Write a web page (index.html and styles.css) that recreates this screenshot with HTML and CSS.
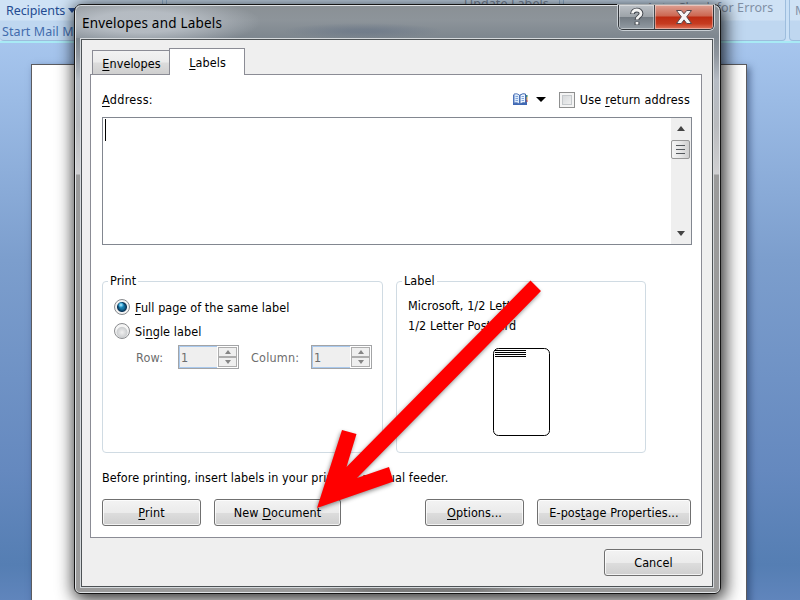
FILE: index.html
```html
<!DOCTYPE html>
<html lang="en">
  <head>
    <meta charset="UTF-8" />
    <meta name="viewport" content="width=device-width, initial-scale=1.0" />
    <title>Envelopes and Labels</title>
    <link rel="stylesheet" href="styles.css">
  </head>
  <body>
    <div class="desktop">
      <div class="ribbon">
        <div class="ribbon-group group-start">
          <span class="recipients">Recipients <i class="caret"></i></span>
          <span class="group-name">Start Mail M</span>
        </div>
        <div class="ribbon-group group-write">
          <span class="update">Update Labels</span>
        </div>
        <div class="ribbon-group group-preview">
          <span class="errors">Auto Check for Errors</span>
        </div>
        <div class="ribbon-group group-finish"><span>M</span></div>
      </div>
      <div class="paper"></div>

      <div class="window">
        <div class="titlebar">
          <h1>Envelopes and Labels</h1>
          <div class="caption-buttons">
            <button class="help" aria-label="Help">
              <svg width="18" height="20" viewBox="0 0 18 20">
                <path d="M4.500 7C4.500 1.800 13 1.800 13 6.500C13 9.700 9 9 9 13M9 14.800V18" fill="none" stroke="#42464d" stroke-width="4.800" />
                <path d="M4.500 6.500C4.500 1.800 13 1.800 13 6.500C13 9.700 9 9 9 12.500M9 15V17.500" fill="none" stroke="#f4f4f4" stroke-width="2.800" />
              </svg>
            </button>
            <button class="close" aria-label="Close">
              <svg width="18" height="16" viewBox="0 0 18 16">
                <path d="M1.500 1.500H6.300L9 4.800L11.700 1.500H16.500L11.700 7.800L16.500 14.500H11.700L9 10.900L6.300 14.500H1.500L6.300 7.800Z" fill="#f6f6f6" stroke="#57474b" />
              </svg>
            </button>
          </div>
        </div>

        <div class="client">
          <div class="tabs">
            <div class="tab"><span><u>E</u>nvelopes</span></div>
            <div class="tab active"><span><u>L</u>abels</span></div>
          </div>

          <div class="panel">
            <div class="address-row">
              <label class="address-label"><u>A</u>ddress:</label>
              <svg class="book" width="16" height="13" viewBox="0 0 16 13">
                <path d="M1 2H15V12H1Z" fill="#3f68b5" />
                <path d="M2 1Q5 0 7.500 2V11Q5 9 2 10Z" fill="#dceafa" stroke="#5a7dbd" />
                <path d="M13.500 1Q11 0 8 2V11Q11 9 13.500 10Z" fill="#eef6ff" stroke="#4168ae" />
                <path d="M3.500 3.500H6M3.500 5.500H6M3.500 7.500H6M9.500 3.500H12M9.500 5.500H12M9.500 7.500H12" stroke="#7fa5dc" />
                <path d="M15 2V4" stroke="#3f9a55" />
                <path d="M15 4V7" stroke="#e8a33b" />
                <path d="M15 7V9" stroke="#c84b3d" />
              </svg>
              <i class="caret black"></i>
              <span class="checkbox"></span>
              <label>Use <u>r</u>eturn address</label>
            </div>

            <div class="address-box">
              <div class="cursor"></div>
              <div class="scrollbar">
                <i class="arrow-up"></i>
                <div class="thumb"><i></i><i></i><i></i></div>
                <i class="arrow-down"></i>
              </div>
            </div>

            <div class="groups">
              <fieldset class="print-group">
                <legend>Print</legend>
                <div class="radio-row">
                  <span class="radio checked"></span>
                  <label><u>F</u>ull page of the same label</label>
                </div>
                <div class="radio-row">
                  <span class="radio"></span>
                  <label>Si<u>n</u>gle label</label>
                </div>
                <div class="spinners">
                  <label class="row-label">Row:</label>
                  <div class="spinner">
                    <span class="value">1</span>
                    <span class="steps"><b><i class="arrow-up"></i></b><b><i class="arrow-down"></i></b></span>
                  </div>
                  <label class="column-label">Column:</label>
                  <div class="spinner">
                    <span class="value">1</span>
                    <span class="steps"><b><i class="arrow-up"></i></b><b><i class="arrow-down"></i></b></span>
                  </div>
                </div>
              </fieldset>

              <fieldset class="label-group">
                <legend>Label</legend>
                <p>Microsoft, 1/2 Letter</p>
                <p>1/2 Letter Postcard</p>
                <svg class="card" width="58" height="89" viewBox="0 0 58 89">
                  <rect x="0.500" y="0.500" width="56" height="87" rx="5" fill="#fff" stroke="#000" />
                  <path d="M2 2.500H33M2 4.500H33M2 6.500H33M2 8.500H33" stroke="#000" />
                </svg>
              </fieldset>
            </div>

            <p class="hint">Before printing, insert labels in your printer's manual feeder.</p>

            <div class="actions">
              <button class="btn"><span><u>P</u>rint</span></button>
              <button class="btn new-doc"><span>New <u>D</u>ocument</span></button>
              <button class="btn options"><span><u>O</u>ptions...</span></button>
              <button class="btn epostage"><span>E-pos<u>t</u>age Properties...</span></button>
            </div>
          </div>

          <div class="footer">
            <button class="btn"><span>Cancel</span></button>
          </div>
        </div>
      </div>

      <!-- pointer to New Document -->
      <svg class="pointer" width="800" height="600" viewBox="0 0 800 600">
        <path d="M530.500 280.500L541 291L357 478L389 467L393.500 481.500L317 508L342 430L356.500 434L346.500 467Z" fill="#ff0000" />
      </svg>
    </div>
  </body>
</html>
```
FILE: styles.css
```css
* {
  box-sizing: border-box;
}

body {
  margin: 0;
  font-family: "DejaVu Sans Condensed", "DejaVu Sans", sans-serif;
  font-stretch: condensed;
  font-size: 12.5px;
  line-height: 16px;
  letter-spacing: 0.08px;
  color: #000;
}

h1,
p {
  margin: 0;
  font-weight: normal;
}

u {
  text-underline-offset: 2px;
  text-decoration-thickness: 1px;
  text-decoration-skip-ink: none;
}

.desktop {
  position: relative;
  width: 800px;
  height: 600px;
  overflow: hidden;
  background: linear-gradient(#a7c6ee 40px, #9bbbe5 100px, #7c9ecd 260px, #6589bf 470px, #557eb3 565px, #6085bc 600px);
}

/* ribbon behind the dialog */
.ribbon {
  display: flex;
  gap: 3px;
  height: 43px;
  background: #c9e0f6;
  border-bottom: 2px solid #a8eaf5;
  font-family: "Noto Sans", sans-serif;
  font-stretch: normal;
  font-size: 12.5px;
}

.ribbon-group {
  flex: none;
  height: 41px;
  border: 1px solid #9dbddd;
  border-top: 0;
  border-radius: 0 0 4px 4px;
  background: linear-gradient(#cfe2f5 0 20px, #bfd7f0 21px);
  color: #8190a5;
  white-space: nowrap;
}

.group-start {
  width: 163px;
  border-left: 0;
  color: #244b91;
}

.recipients {
  display: block;
  padding: 3px 0 0 6px;
  letter-spacing: -0.1px;
}

.group-name {
  display: block;
  padding: 5px 0 0 2px;
  color: #426cad;
}

.group-write {
  width: 394px;
  padding-left: 297px;
}

.update,
.errors {
  display: block;
  margin-top: -4px;
}

.group-preview {
  width: 223px;
  padding-left: 82px;
}

.errors {
  margin-top: 0;
}

.group-finish {
  width: 40px;
  padding: 3px 0 0 5px;
}

.desktop .group-finish {
  margin-right: -40px;
}

.paper {
  position: absolute;
  left: 31px;
  top: 64px;
  width: 716px;
  height: 540px;
  border: 1px solid #5b5b5f;
  background: #fff;
  box-shadow: 3px 3px 7px rgba(30, 50, 90, 0.55);
}

.caret {
  display: inline-block;
  width: 0;
  height: 0;
  border: 4px solid transparent;
  border-top: 5px solid #244b91;
  border-bottom: 0;
  vertical-align: 2px;
}

.caret.black {
  border-width: 5px 5px 0;
  border-top-color: #000;
}

/* dialog */
.window {
  position: absolute;
  left: 74px;
  top: 4px;
  width: 647px;
  height: 590px;
  padding: 0 7px 7px 6px;
  border: 1px solid #151515;
  border-radius: 7px 7px 6px 6px;
  background:
    radial-gradient(ellipse 110px 8px at 345px 584px, rgba(90, 90, 90, 0.5) 50%, transparent 100%),
    linear-gradient(#8a9095 0, #8d949a 15px, #7e878f 32px, #8e959d 50px, #b6bcc4 75px, #b9bbbe 120px, #d0d0d2 169px, #9b9b9b 170px);
  box-shadow: inset 0 0 0 1px #dfe2e5, 2px 3px 17px 2px rgba(0, 0, 0, 0.85);
}

.titlebar {
  display: flex;
  justify-content: space-between;
  height: 33px;
  margin: 0 -5px;
  padding: 0 4px 0 6px;
  background:
    radial-gradient(ellipse 80px 8px at 287px 26px, rgba(90, 105, 128, 0.4) 20%, transparent 100%),
    radial-gradient(ellipse 120px 26px at 65px 17px, rgba(195, 201, 208, 0.75) 40%, transparent 100%);
}

.titlebar h1 {
  padding-top: 9px;
  font-family: "Noto Sans", sans-serif;
  font-stretch: normal;
  font-size: 13.5px;
  line-height: 18px;
  letter-spacing: 0.2px;
}

.caption-buttons {
  display: flex;
  height: 25px;
  border: 1px solid #33373c;
  border-top: 0;
  border-radius: 0 0 5px 5px;
  box-shadow: 0 0 0 1px rgba(230, 235, 240, 0.7);
  overflow: hidden;
}

.caption-buttons button {
  display: flex;
  align-items: center;
  justify-content: center;
  padding: 0;
  border: 0;
  box-shadow: inset 0 0 0 1px rgba(255, 255, 255, 0.4);
}

.help {
  width: 35px;
  background: linear-gradient(#bcc1c6, #9da3a9 48%, #737b83 52%, #929ba3);
}

.caption-buttons .close {
  width: 59px;
  border-left: 1px solid #41454a;
  background: linear-gradient(#dda093, #cc6650 46%, #bc2b12 50%, #c63b20 78%, #e0755c);
}

.client {
  display: flex;
  flex-direction: column;
  height: 548px;
  margin-top: 1px;
  padding: 8px 10px 0 8px;
  border: 1px solid #4d5255;
  background: #efefef;
  box-shadow: 0 0 0 1px #d5d9dc;
}

.tabs {
  display: flex;
  align-items: flex-end;
  height: 27px;
  padding-left: 2px;
}

.tab {
  display: flex;
  justify-content: center;
  width: 77px;
  height: 24px;
  margin-bottom: 1px;
  padding: 5px 0 0 1px;
  border: 1px solid #8b8c95;
  border-right: 0;
  border-bottom: 0;
  background: linear-gradient(#f2f2f2, #ebebeb 48%, #dcdcdc 52%, #cfcfcf);
}

.tab.active {
  position: relative;
  z-index: 1;
  width: 76px;
  height: 27px;
  margin-bottom: 0;
  padding-top: 6px;
  border-right: 1px solid #8b8c95;
  background: #fff;
}

.panel {
  height: 464px;
  margin-top: -1px;
  padding: 0 9px 0 11px;
  border: 1px solid #8b8c95;
  background: #fff;
}

.address-row {
  display: flex;
  align-items: center;
  height: 42px;
  padding: 7px 2px 0 0;
}

.address-label {
  margin-right: auto;
  letter-spacing: 0.3px;
}

.book {
  margin-right: 8px;
}

.checkbox {
  width: 16px;
  height: 16px;
  margin: 0 5px 0 13px;
  border: 1px solid #8e8f8f;
  background: linear-gradient(135deg, #cfd2d5, #f6f6f6);
  box-shadow: inset 0 0 0 2px #f4f4f4, inset 0 0 0 3px #c4c8cb;
}

.checkbox + label {
  letter-spacing: 0.2px;
}

.address-box {
  display: flex;
  justify-content: space-between;
  height: 128px;
  border: 1px solid #828790;
}

.cursor {
  width: 1px;
  height: 22px;
  margin: 1px 0 0 2px;
  background: #000;
}

.scrollbar {
  display: flex;
  flex-direction: column;
  align-items: center;
  width: 20px;
  padding: 8px 1px 8px 0;
  background: #efefef;
}

.arrow-up,
.arrow-down {
  width: 0;
  height: 0;
  border: 4px solid transparent;
}

.arrow-up {
  border-top: 0;
  border-bottom: 5px solid #444;
}

.arrow-down {
  border-bottom: 0;
  border-top: 5px solid #444;
}

.scrollbar .arrow-down {
  margin-top: auto;
}

.thumb {
  display: flex;
  flex-direction: column;
  align-items: center;
  gap: 3px;
  width: 19px;
  height: 19px;
  margin-top: 9px;
  padding-top: 4px;
  border: 1px solid #979797;
  border-radius: 2px;
  background: linear-gradient(90deg, #f4f4f4, #e6e6e6 50%, #cfcfcf);
}

.thumb i {
  width: 9px;
  height: 1px;
  background: #55595d;
}

.groups {
  display: flex;
  gap: 13px;
  margin-top: 28px;
}

fieldset {
  height: 180px;
  margin: 0;
  padding: 0;
  border: 1px solid #d0dbe3;
  border-radius: 4px;
}

legend {
  margin-left: 5px;
  padding: 0 2px;
}

.print-group {
  width: 281px;
}

.label-group {
  width: 250px;
  padding-left: 11px;
}

.label-group legend {
  margin-left: -6px;
}

.label-group p {
  height: 20px;
  line-height: 20px;
}

.label-group p:first-of-type {
  margin-top: 7px;
}

.card {
  display: block;
  margin: 12px 0 0 85px;
}

.radio-row {
  display: flex;
  align-items: center;
  gap: 5px;
  height: 24px;
  padding-left: 11px;
}

.radio-row label,
.spinners label {
  padding-top: 1px;
}

.print-group legend + .radio-row {
  margin-top: 6px;
}

.radio {
  width: 16px;
  height: 16px;
  border: 1px solid #898b8e;
  border-radius: 50%;
  background: radial-gradient(circle at 50% 60%, #f0f0f0, #cdcfd1 5px, #f5f5f5 6px);
}

.radio.checked {
  background: radial-gradient(circle at 6px 5px, #c5f0ff 0, #35a5d5 2px, transparent 3px), radial-gradient(circle, #1779a8 2px, #0b3557 4.500px, #f3f3f3 5.500px);
}

.spinners {
  display: flex;
  align-items: center;
  height: 24px;
  margin-top: 2px;
  padding-left: 33px;
  color: #6d6d6d;
}

.spinners label {
  letter-spacing: 0.2px;
}

.row-label {
  width: 42px;
}

.column-label {
  width: 60px;
  margin-left: 12px;
}

.spinner {
  display: flex;
  width: 61px;
  height: 24px;
  border: 1px solid #a3a4a6;
  background: #efefef;
}

.value {
  flex: 1;
  padding: 3px 0 0 1px;
  border: 1px solid #a9c9ee;
  border-right: 0;
}

.steps {
  display: flex;
  flex-direction: column;
  width: 21px;
  padding: 1px;
  background: #fff;
}

.steps b {
  display: flex;
  flex: 1;
  align-items: center;
  justify-content: center;
  border: 1px solid #adadad;
  background: #efefef;
}

.steps i {
  border-left-width: 3px;
  border-right-width: 3px;
}

.steps .arrow-up {
  border-bottom: 4px solid #858585;
}

.steps .arrow-down {
  border-top: 4px solid #858585;
}

.hint {
  margin-top: 17px;
}

.actions {
  display: flex;
  margin: 13px 1px 0 0;
}

.btn {
  width: 99px;
  height: 27px;
  padding: 0;
  border: 1px solid #707070;
  border-radius: 3px;
  background: linear-gradient(#f3f3f3, #ebebeb 50%, #dddddd 51%, #cfcfcf);
  box-shadow: inset 0 0 0 1px rgba(255, 255, 255, 0.75);
  font: inherit;
  letter-spacing: inherit;
  color: #000;
}

.new-doc {
  width: 127px;
  margin-left: 13px;
}

.options {
  margin-left: auto;
}

.epostage {
  width: 154px;
  margin-left: 13px;
}

.footer {
  display: flex;
  justify-content: flex-end;
  margin: 11px -1px 0 0;
}

.pointer {
  position: absolute;
  left: 0;
  top: 0;
  filter: drop-shadow(-1px 2px 2px rgba(0, 0, 0, 0.45));
}
```
